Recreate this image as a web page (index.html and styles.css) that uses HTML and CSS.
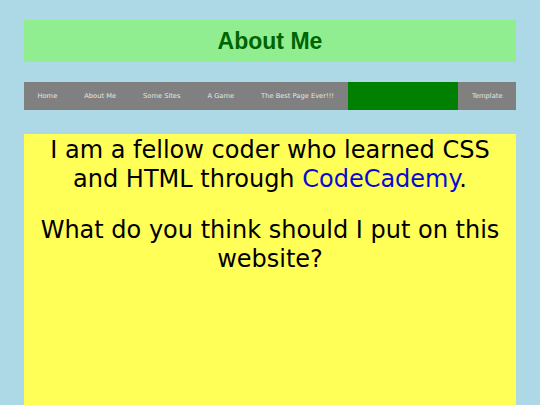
FILE: index.html
```html
<!DOCTYPE html>
<html>
<head>
<meta charset="utf-8">
<title>About Me</title>
<link rel="stylesheet" href="styles.css">
</head>
<body>
<div class="page">
  <header class="header">
    <h1 class="title">About Me</h1>
  </header>
  <nav class="nav">
    <a class="nav-item" href="#">Home</a>
    <a class="nav-item" href="#">About Me</a>
    <a class="nav-item" href="#">Some Sites</a>
    <a class="nav-item" href="#">A Game</a>
    <a class="nav-item" href="#">The Best Page Ever!!!</a>
    <span class="nav-item nav-active"></span>
    <a class="nav-item" href="#">Template</a>
  </nav>
  <main class="content">
    <p class="para">I am a fellow coder who learned CSS and HTML through <a class="link" href="#">CodeCademy</a>.</p>
    <p class="para">What do you think should I put on this website?</p>
  </main>
</div>
</body>
</html>
```

FILE: styles.css
```css
html, body {
  margin: 0;
  padding: 0;
  background: #add8e6;
  overflow: hidden;
}
.page {
  padding: 20px 24px 0 24px;
  display: flex;
  flex-direction: column;
}
.header {
  background: #90ee90;
  height: 42px;
  display: flex;
  align-items: center;
  justify-content: center;
}
.title {
  margin: 0;
  font-family: "Liberation Sans", Arial, sans-serif;
  font-weight: bold;
  font-size: 23px;
  color: #006400;
  line-height: 1;
}
.nav {
  margin-top: 20px;
  height: 28px;
  background: #808080;
  display: flex;
  align-items: stretch;
}
.nav-item {
  display: flex;
  align-items: center;
  flex-shrink: 0;
  white-space: nowrap;
  padding: 0 13.5px;
  font-family: "DejaVu Sans", Verdana, sans-serif;
  font-size: 6.7px;
  color: #e6e6e6;
  text-decoration: none;
}
.nav-active {
  background: #008000;
  flex: 1;
  padding: 0;
}
.content {
  margin-top: 24px;
  background: #ffff58;
  height: 269px;
  text-align: center;
  font-family: "DejaVu Sans", Verdana, sans-serif;
  font-size: 24px;
  line-height: 29px;
  color: #000;
  padding: 2px 8px 0 8px;
}
.para {
  margin: 0 0 22px 0;
}
.link {
  color: #0a0ad6;
  text-decoration: none;
}
```
